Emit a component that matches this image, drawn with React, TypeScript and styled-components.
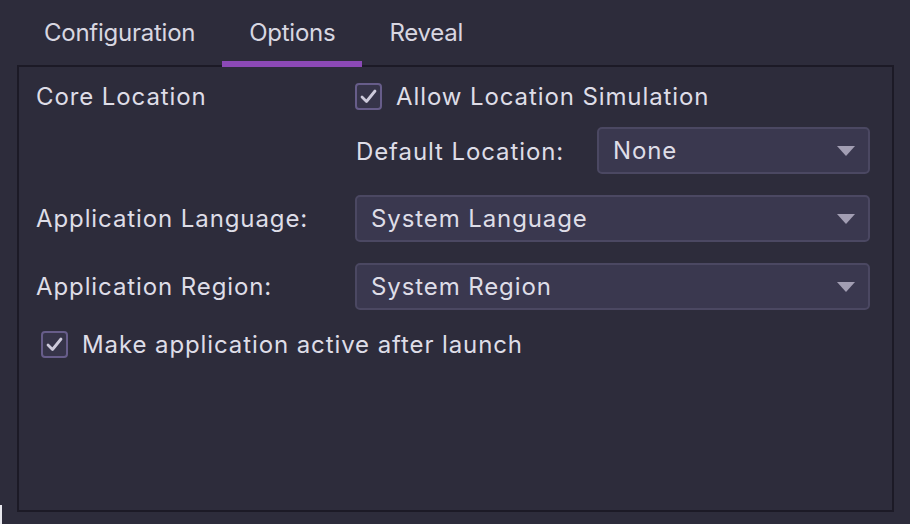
import React from 'react';
import styled, { createGlobalStyle } from 'styled-components';

const GlobalStyle = createGlobalStyle`
    html, body {
        margin: 0;
        padding: 0;
        background-color: #2d2c3b;
    }
    body {
        font-family: Inter, "Noto Sans", sans-serif;
        -webkit-font-smoothing: antialiased;
    }
`;

const Page = styled.div`
    position: relative;
    width: 910px;
    height: 524px;
    overflow: hidden;
    background-color: #2d2c3b;
    color: #dedde7;
    font-size: 24px;
    letter-spacing: 0.9px;
`;

const TabBar = styled.div`
    display: flex;
    height: 65px;
    padding-left: 17px;
`;

const Tab = styled.div<{ $active?: boolean }>`
    position: relative;
    display: flex;
    align-items: center;
    padding: 0 27px;
    color: #d8d7e1;
    letter-spacing: -0.25px;
    z-index: 1;

    &::after {
        content: '';
        display: ${(p) => (p.$active ? 'block' : 'none')};
        position: absolute;
        left: 0;
        right: 0;
        bottom: -2px;
        height: 6px;
        background-color: #8b49b6;
    }
`;

const Panel = styled.div`
    box-sizing: border-box;
    margin-left: 17px;
    width: 877px;
    height: 447px;
    border: 2px solid #1c1a26;
    padding: 11px 22px 0 17px;
    display: flex;
    flex-direction: column;
`;

const Row = styled.div<{ $top?: number; $height: number }>`
    display: flex;
    align-items: center;
    height: ${(p) => p.$height}px;
    margin-top: ${(p) => p.$top ?? 0}px;
`;

const Label = styled.div<{ $width?: number }>`
    width: ${(p) => (p.$width ? `${p.$width}px` : 'auto')};
    flex-shrink: 0;
    white-space: nowrap;
`;

const CheckLine = styled.label<{ $indent?: number }>`
    display: flex;
    align-items: center;
    gap: 14px;
    margin-left: ${(p) => p.$indent ?? 0}px;
    white-space: nowrap;
`;

const Box = styled.span`
    box-sizing: border-box;
    width: 27px;
    height: 27px;
    border: 2px solid #675d8a;
    border-radius: 4px;
    background-color: #363449;
    display: flex;
    align-items: center;
    justify-content: center;
`;

const Select = styled.div`
    box-sizing: border-box;
    height: 47px;
    flex: 1;
    display: flex;
    align-items: center;
    justify-content: space-between;
    padding: 0 13px 0 14px;
    border: 2px solid #4b4862;
    border-radius: 5px;
    background-color: #3a384f;
`;

const SubLabel = styled.div`
    width: 241px;
    flex-shrink: 0;
    padding-left: 1px;
    padding-top: 2px;
    white-space: nowrap;
`;

const Glitch = styled.div`
    position: absolute;
    left: 0;
    top: 505px;
    width: 2px;
    height: 19px;
    background-color: #e8e8ee;
`;

function Check() {
    return (
        <Box>
            <svg width="17" height="15" viewBox="0 0 17 15">
                <path
                    d="M2 8 L6.5 12.5 L15 2"
                    fill="none"
                    stroke="#cdcadb"
                    strokeWidth="2.8"
                    strokeLinecap="round"
                    strokeLinejoin="round"
                />
            </svg>
        </Box>
    );
}

function Caret() {
    return (
        <svg width="18" height="10" viewBox="0 0 18 10">
            <path d="M0 0 H18 L9 10 Z" fill="#a29eb3" />
        </svg>
    );
}

export default function App() {
    return (
        <Page>
            <GlobalStyle />
            <TabBar>
                <Tab>Configuration</Tab>
                <Tab $active>Options</Tab>
                <Tab>Reveal</Tab>
            </TabBar>
            <Panel>
                <Row $height={36}>
                    <Label $width={319}>Core Location</Label>
                    <CheckLine>
                        <Check />
                        Allow Location Simulation
                    </CheckLine>
                </Row>
                <Row $height={47} $top={13}>
                    <Label $width={319} />
                    <SubLabel>Default Location:</SubLabel>
                    <Select>
                        None
                        <Caret />
                    </Select>
                </Row>
                <Row $height={47} $top={21}>
                    <Label $width={319}>Application Language:</Label>
                    <Select>
                        System Language
                        <Caret />
                    </Select>
                </Row>
                <Row $height={47} $top={21}>
                    <Label $width={319}>Application Region:</Label>
                    <Select>
                        System Region
                        <Caret />
                    </Select>
                </Row>
                <Row $height={27} $top={21}>
                    <CheckLine $indent={5}>
                        <Check />
                        Make application active after launch
                    </CheckLine>
                </Row>
            </Panel>
            <Glitch />
        </Page>
    );
}
